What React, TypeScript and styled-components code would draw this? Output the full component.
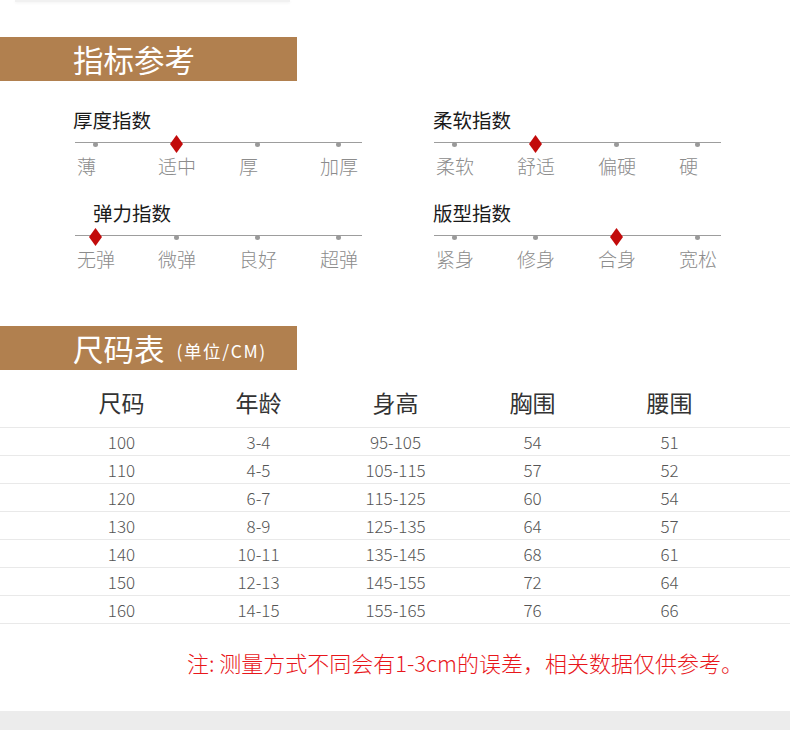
import React from 'react';
import styled, { createGlobalStyle } from 'styled-components';

const GlobalStyle = createGlobalStyle`
  body {
    margin: 0;
    background: #ffffff;
    font-family: "Noto Sans CJK SC", "Noto Sans", sans-serif;
  }
`;

const Page = styled.div`
  width: 790px;
  height: 756px;
  overflow: hidden;
  background: #fff;
`;

const TopEdge = styled.div`
  width: 275px;
  height: 2px;
  margin-left: 15px;
  background: #f1f1f1;
  box-shadow: 0 1px 3px rgba(0, 0, 0, 0.06);
`;

const Banner = styled.div<{ $top: number }>`
  margin-top: ${(p) => p.$top}px;
  width: 297px;
  height: 44px;
  box-sizing: border-box;
  padding-left: 73px;
  display: flex;
  align-items: center;
  background: #b1804f;
`;

const BannerTitle = styled.h2`
  margin: 0;
  font-size: 30.5px;
  font-weight: 400;
  line-height: 1;
  color: #fff;
  white-space: nowrap;
`;

const BannerSub = styled.span`
  display: inline-block;
  margin-left: 12px;
  font-size: 17.5px;
  letter-spacing: 1.6px;
  vertical-align: 3px;
`;

const IndexGrid = styled.div`
  display: grid;
  grid-template-columns: 324px 324px;
  column-gap: 35px;
  row-gap: 23px;
  padding: 27px 0 0 55px;
`;

const Group = styled.div`
  display: flex;
  flex-direction: column;
`;

const GroupTitle = styled.div<{ $indent: number }>`
  margin-left: ${(p) => p.$indent}px;
  font-size: 19.5px;
  line-height: 24px;
  color: #1a1a1a;
`;

const Track = styled.div`
  position: relative;
  margin-top: 3px;
  height: 14px;
  display: grid;
  grid-template-columns: repeat(4, 81px);
  align-items: center;
  justify-items: center;

  &::before {
    content: '';
    position: absolute;
    left: 20px;
    width: 287px;
    top: 7px;
    height: 1px;
    background: #9d9d9d;
  }
`;

const Dot = styled.span`
  position: relative;
  width: 5px;
  height: 5px;
  border-radius: 50%;
  background: #9a9a9a;
`;

const DiamondSvg = styled.svg`
  position: relative;
  display: block;
`;

const Labels = styled.div`
  margin-top: 5px;
  display: grid;
  grid-template-columns: repeat(4, 81px);
  justify-items: center;
`;

const Label = styled.span`
  width: 40px;
  margin-left: 3px;
  font-size: 19px;
  line-height: 24px;
  color: #8c8c8c;
  font-weight: 300;
  white-space: nowrap;
`;

const Table = styled.div`
  display: flex;
  flex-direction: column;
`;

const Row = styled.div<{ $head?: boolean }>`
  display: grid;
  grid-template-columns: repeat(5, 137px);
  padding-left: 53px;
  padding-top: ${(p) => (p.$head ? 18 : 0)}px;
  padding-bottom: ${(p) => (p.$head ? 11 : 0)}px;
  border-bottom: 1px solid #e9e9e9;
  line-height: ${(p) => (p.$head ? 28 : 27)}px;
  font-size: ${(p) => (p.$head ? 23 : 17)}px;
  font-weight: ${(p) => (p.$head ? 400 : 300)};
  color: ${(p) => (p.$head ? '#333' : '#555')};
`;

const Cell = styled.div`
  text-align: center;
`;

const Note = styled.p`
  margin: 23px 0 0;
  padding-right: 47px;
  text-align: right;
  font-size: 22px;
  line-height: 30px;
  color: #e8171c;
  font-weight: 300;
  white-space: nowrap;
`;

const FooterBand = styled.div`
  margin-top: 34px;
  height: 19px;
  background: #ececec;
`;

type Scale = { title: string; indent: number; marks: string[]; pick: number };

const scales: Scale[] = [
  { title: '厚度指数', indent: 18, marks: ['薄', '适中', '厚', '加厚'], pick: 1 },
  { title: '柔软指数', indent: 19, marks: ['柔软', '舒适', '偏硬', '硬'], pick: 1 },
  { title: '弹力指数', indent: 38, marks: ['无弹', '微弹', '良好', '超弹'], pick: 0 },
  { title: '版型指数', indent: 19, marks: ['紧身', '修身', '合身', '宽松'], pick: 2 },
];

const sizes = [
  ['100', '3-4', '95-105', '54', '51'],
  ['110', '4-5', '105-115', '57', '52'],
  ['120', '6-7', '115-125', '60', '54'],
  ['130', '8-9', '125-135', '64', '57'],
  ['140', '10-11', '135-145', '68', '61'],
  ['150', '12-13', '145-155', '72', '64'],
  ['160', '14-15', '155-165', '76', '66'],
];

const Diamond = () => (
  <DiamondSvg width="13" height="18" viewBox="0 0 13 18">
    <polygon points="6.5,0 13,9 6.5,18 0,9" fill="#c20b0b" />
  </DiamondSvg>
);

export default function App() {
  return (
    <Page>
      <GlobalStyle />
      <TopEdge />
      <Banner $top={35}>
        <BannerTitle>指标参考</BannerTitle>
      </Banner>
      <IndexGrid>
        {scales.map((s) => (
          <Group key={s.title}>
            <GroupTitle $indent={s.indent}>{s.title}</GroupTitle>
            <Track>
              {s.marks.map((m, i) => (i === s.pick ? <Diamond key={m} /> : <Dot key={m} />))}
            </Track>
            <Labels>
              {s.marks.map((m) => (
                <Label key={m}>{m}</Label>
              ))}
            </Labels>
          </Group>
        ))}
      </IndexGrid>
      <Banner $top={55}>
        <BannerTitle>
          尺码表<BannerSub>(单位/CM)</BannerSub>
        </BannerTitle>
      </Banner>
      <Table>
        <Row $head>
          {['尺码', '年龄', '身高', '胸围', '腰围'].map((h) => (
            <Cell key={h}>{h}</Cell>
          ))}
        </Row>
        {sizes.map((r) => (
          <Row key={r[0]}>
            {r.map((c, i) => (
              <Cell key={i}>{c}</Cell>
            ))}
          </Row>
        ))}
      </Table>
      <Note>注: 测量方式不同会有1-3cm的误差，相关数据仅供参考。</Note>
      <FooterBand />
    </Page>
  );
}
